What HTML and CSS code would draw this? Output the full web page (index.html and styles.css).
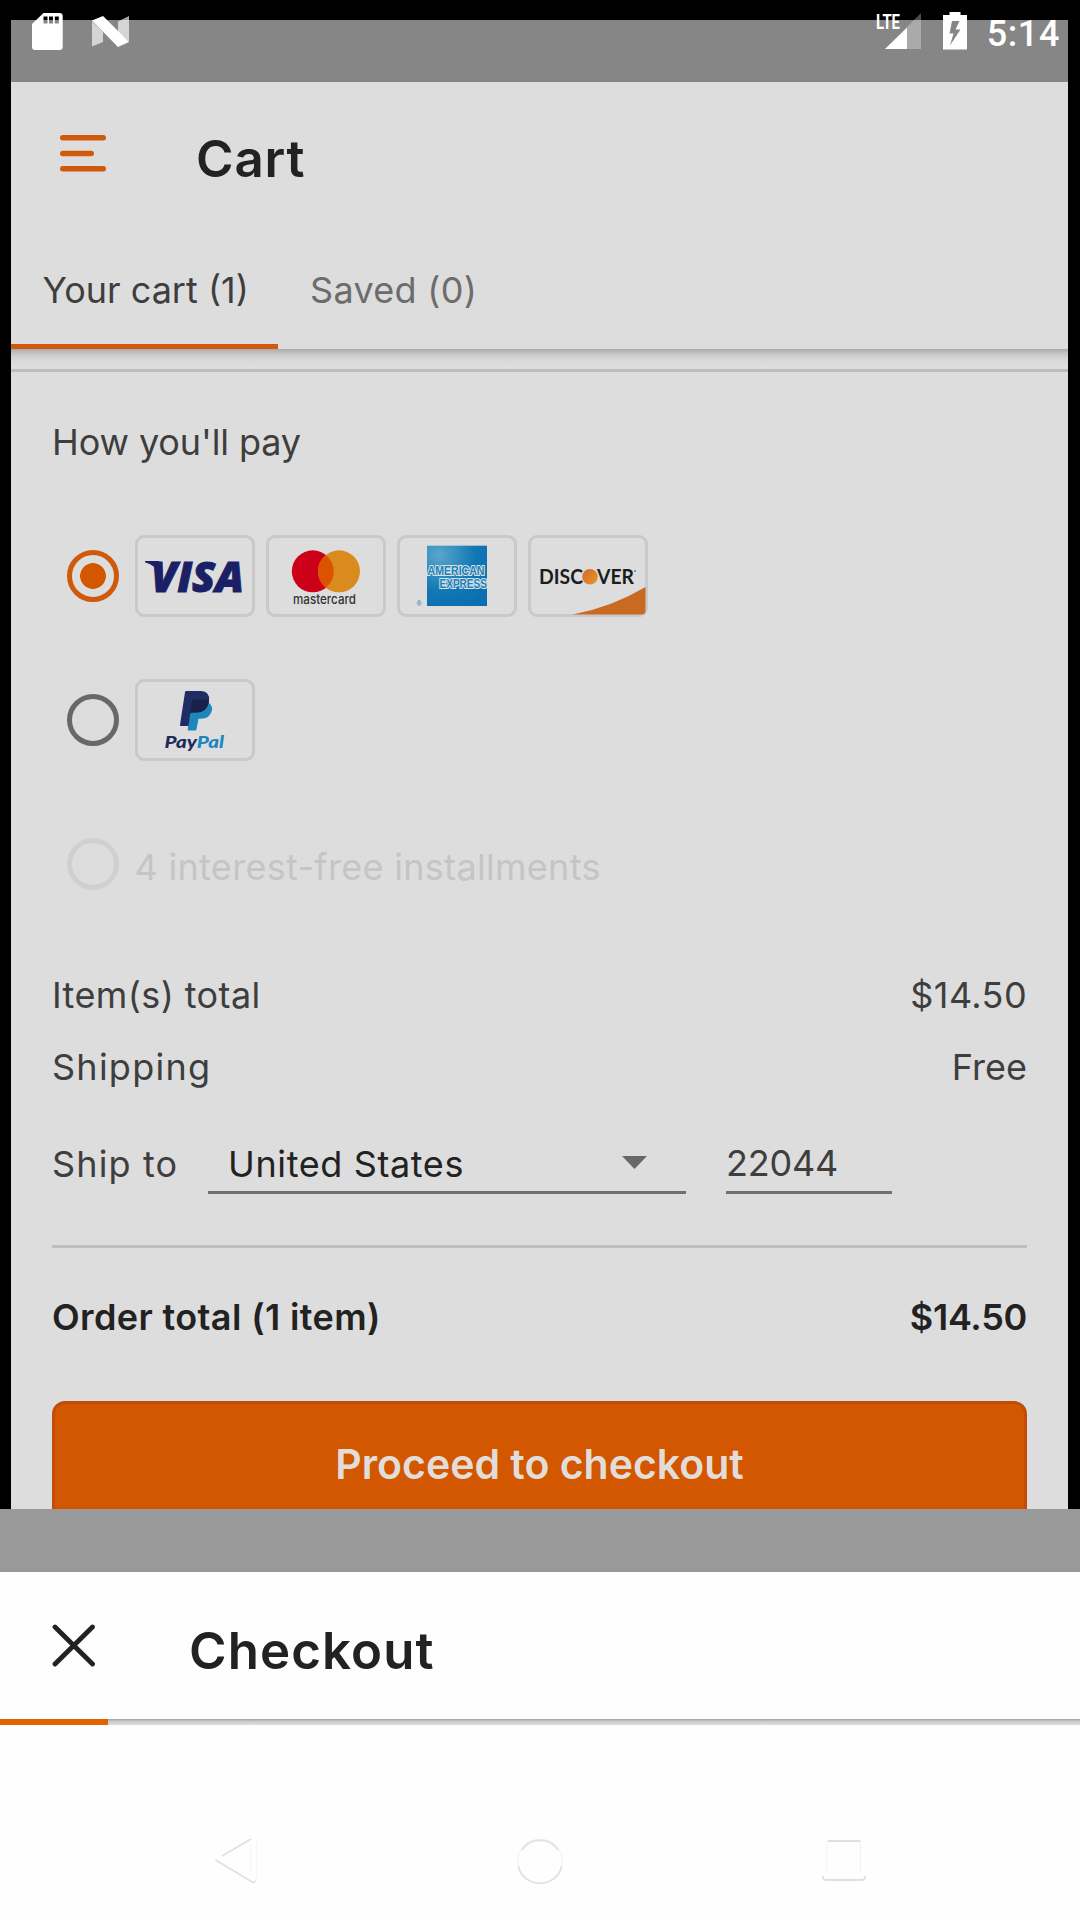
FILE: index.html
```html
<!DOCTYPE html>
<html lang="en">
<head>
<meta charset="utf-8">
<title>Cart</title>
<link rel="stylesheet" href="styles.css">
</head>
<body>
<div class="device">
  <div class="status-bar">
    <svg class="status-left" width="110" height="50" viewBox="0 0 110 50">
      <path fill="#fff" fill-rule="evenodd" d="M11.500 13H27.500Q30.700 13 30.700 16V47Q30.700 50 27.500 50H3Q0 50 0 47V24ZM11.500 16.500V23.500H15.500V16.500ZM17 16.500V23.500H21V16.500ZM22.800 16.500V23.500H26.800V16.500Z"/>
      <path fill="#fff" fill-opacity=".65" d="M60 21L71 32V42L60 46.500ZM86 21.500L97 16V42L86 32Z"/>
      <path fill="#fff" d="M60 20.500L71 16L97 42L86 47Z"/>
    </svg>
    <div class="status-right">
      <svg width="92" height="50" viewBox="0 0 92 50">
        <path fill="#fff" fill-opacity=".3" d="M45 13V49H31V27Z"/>
        <path fill="#fff" d="M9 49L31 27.500V49Z"/>
        <text class="lte" x="0" y="29" textLength="24" lengthAdjust="spacingAndGlyphs">LTE</text>
        <path fill="#fff" fill-rule="evenodd" d="M67 15H73.500V12H84.500V15H91V49.500H67ZM76 21L73.500 33.500H77.500L74 45.500L84.500 29.500H79.500L83.500 21Z"/>
      </svg>
      <span class="clock">5:14</span>
    </div>
  </div>

  <main class="cart">
    <header class="app-bar">
      <svg class="menu-icon" width="46" height="37" viewBox="0 0 46 37">
        <path d="M2.750 2.750H43.250M2.750 18.400H31.250M2.750 33.800H43.250" stroke="#d05a0c" stroke-width="5.500" stroke-linecap="round"/>
      </svg>
      <h1 class="title cart-title">Cart</h1>
    </header>
    <nav class="tabs">
      <a class="tab tab-active">Your cart (1)</a>
      <a class="tab tab-saved">Saved (0)</a>
    </nav>

    <section class="content">
      <div class="body">
        <h2 class="pay-title">How you'll pay</h2>
        <div class="option option-cards">
          <span class="radio radio-on"></span>
          <span class="card"><svg width="120" height="82" viewBox="0 0 120 82">
            <path fill="#1a1f66" d="M10 26H24L27 42Q21 30 10 27.200Z"/>
            <text class="visa" x="16" y="56.700" textLength="93" lengthAdjust="spacingAndGlyphs">VISA</text>
          </svg></span>
          <span class="card"><svg width="120" height="82" viewBox="0 0 120 82">
            <circle cx="46.800" cy="36.300" r="21" fill="#cd0019"/>
            <circle cx="73" cy="36.300" r="21" fill="#d98b1d"/>
            <path fill="#dc5200" d="M59.900 19.900A21 21 0 0 1 59.900 52.700A21 21 0 0 1 59.900 19.900Z"/>
            <text class="mc" x="27" y="68.800" textLength="63" lengthAdjust="spacingAndGlyphs">mastercard</text>
          </svg></span>
          <span class="card"><svg width="120" height="82" viewBox="0 0 120 82">
            <defs><radialGradient id="ax" cx=".2" cy=".15" r="1"><stop offset="0" stop-color="#5aa6cb"/><stop offset=".6" stop-color="#1278b4"/><stop offset="1" stop-color="#0a6fae"/></radialGradient></defs>
            <rect x="30" y="10.700" width="60" height="60.300" fill="url(#ax)"/>
            <text class="amex" x="30.500" y="40" textLength="57" lengthAdjust="spacingAndGlyphs">AMERICAN</text>
            <text class="amex" x="42.500" y="53" textLength="47.500" lengthAdjust="spacingAndGlyphs">EXPRESS</text>
            <text class="reg" x="19.500" y="71">®</text>
          </svg></span>
          <span class="card"><svg width="120" height="82" viewBox="0 0 120 82">
            <defs><linearGradient id="ball" x1="0" y1="0" x2="1" y2="1"><stop offset="0" stop-color="#d9652a"/><stop offset="1" stop-color="#e39a2c"/></linearGradient></defs>
            <path fill="#c96a22" d="M44.500 79.500Q84 72 117.500 52V76Q117.500 79.500 113 79.500Z"/>
            <text class="disc" x="11" y="49.300" textLength="44" lengthAdjust="spacingAndGlyphs">DISC</text>
            <circle cx="62" cy="41.800" r="7.800" fill="url(#ball)"/>
            <text class="disc" x="69" y="49.300" textLength="37" lengthAdjust="spacingAndGlyphs">VER</text>
            <circle cx="107" cy="36" r=".8" fill="#333"/>
          </svg></span>
        </div>
        <div class="option option-paypal">
          <span class="radio"></span>
          <span class="card"><svg width="120" height="82" viewBox="0 0 120 82">
            <path fill="#1c86bd" d="M56 24H74Q78 27 76.800 32Q74.500 39.800 66 39.800H63.500L61.500 50Q61.300 51.500 60 51.500H53.800Q52.500 51.500 52.800 50Z"/>
            <path fill="#1f2d63" d="M51.500 12H66Q75 12.500 74 21.500Q72.500 33.500 61 33.500H57Q55.500 33.500 55.200 35L53.500 47H46Q44.700 47 45 45.700L50 13.300Q50.200 12 51.500 12Z"/>
            <path fill="#1a2148" d="M58 20.500H70.500Q73 21 74 22.500Q72.200 33.500 61 33.500H57Q55.800 33.500 55.400 34.500L57 21.500Z"/>
            <text class="paypal" x="29.500" y="68.500" textLength="59.500" lengthAdjust="spacingAndGlyphs">Pay<tspan fill="#1c86bd">Pal</tspan></text>
          </svg></span>
        </div>
        <div class="option option-off">
          <span class="radio radio-off"></span>
          <span class="off-label">4 interest-free installments</span>
        </div>

        <div class="row row-items"><span class="items">Item(s) total</span><span class="price">$14.50</span></div>
        <div class="row"><span class="shipping">Shipping</span><span>Free</span></div>
        <div class="ship">
          <span class="ship-label">Ship to</span>
          <span class="select">United States
            <svg width="26" height="13" viewBox="0 0 26 13"><path fill="#686868" d="M0 0H25L12.500 13Z"/></svg>
          </span>
          <span class="zip">22044</span>
        </div>
        <div class="total"><span class="total-label">Order total (1 item)</span><span class="total-price">$14.50</span></div>
        <div class="button">Proceed to checkout</div>
      </div>
    </section>
  </main>

  <section class="sheet">
    <div class="sheet-status"></div>
    <header class="sheet-bar">
      <svg class="close-icon" width="44" height="44" viewBox="0 0 44 44">
        <path d="M3 3L40.500 40M40.500 3L3 40" stroke="#222" stroke-width="4.800" stroke-linecap="round"/>
      </svg>
      <h1 class="title sheet-title">Checkout</h1>
    </header>
    <div class="progress"><div class="progress-value"></div></div>
    <footer class="nav-bar">
      <svg width="42" height="46" viewBox="0 0 42 46" fill="none">
        <path d="M36 1L7 18M0.500 22L38 44.500L41 43" stroke="#e0e0e0" stroke-width="1.800"/>
        <path d="M35.500 2V34M41.500 2V42" stroke="#f6f6f6"/>
      </svg>
      <svg width="50" height="46" viewBox="0 0 50 46" fill="none">
        <circle cx="25" cy="23" r="22" stroke="#f3f3f3" stroke-width="1.200"/>
        <path d="M7 12A21.500 21.500 0 0 1 43 12M3 28A22.500 22 0 0 0 47 28" stroke="#e2e2e2" stroke-width="1.800"/>
      </svg>
      <svg width="44" height="46" viewBox="0 0 44 46" fill="none">
        <path d="M5.500 3H38.500M1 38Q1 42 4 42H40Q43 42 43 38" stroke="#e0e0e0" stroke-width="1.800"/>
        <path d="M5 4V34M38.500 4V34" stroke="#f4f4f4"/>
      </svg>
    </footer>
  </section>
</div>
</body>
</html>
```
FILE: styles.css
```css
* { box-sizing: border-box; }

body {
  margin: 0;
  background: #000;
  font-family: Inter, "Liberation Sans", sans-serif;
  font-size: 36px;
  line-height: 44px;
  color: #3e3e3e;
}

svg { display: block; flex: none; }

.device {
  position: relative;
  display: flex;
  flex-direction: column;
  width: 1080px;
  height: 1920px;
  overflow: hidden;
  background: #000;
}

/* System icons float over the app */
.status-bar {
  position: absolute;
  top: 0;
  left: 0;
  z-index: 2;
  display: flex;
  justify-content: space-between;
  width: 100%;
  height: 60px;
  padding: 0 20px 0 32px;
}
.status-right { display: flex; gap: 19px; }
.clock {
  padding-top: 12px;
  color: #fff;
  font: 500 36px/44px Roboto, sans-serif;
  letter-spacing: .6px;
}
.lte { font: 700 21px Roboto, sans-serif; fill: #fff; }

/* Cart screen */
.cart {
  flex: none;
  height: 1489px;
  margin: 20px 12px 0 11px;
  border-top: 62px solid #868686;
  background: #ddd;
  overflow: hidden;
}
.app-bar {
  display: flex;
  height: 138px;
  padding: 53px 0 0 49px;
}
.menu-icon { margin-right: 90px; }
.title {
  margin: 0;
  color: #222;
  font-size: 51px;
  font-weight: 600;
  line-height: 46px;
}
.cart-title { padding-top: 1px; letter-spacing: .8px; }
.tabs {
  display: flex;
  height: 129px;
}
.tab { padding-top: 48px; }
.tab-active {
  width: 267px;
  padding-left: 31.500px;
  border-bottom: 5px solid #d05a0c;
}
.tab-saved {
  padding-left: 32px;
  color: #6c6c6c;
  letter-spacing: .3px;
}

/* The gradient is the tab bar's drop shadow */
.content {
  padding-top: 20px;
  background: linear-gradient(#a9a9a9, #bcbcbc 3px, #cecece 7px, #d9d9d9 12px, #ddd 17px);
}
.body {
  border-top: 3px solid #bdbdbd;
  padding: 0 41px;
}
.pay-title {
  height: 138px;
  margin: 0;
  font-size: 36px;
  font-weight: 400;
  line-height: 140px;
  letter-spacing: -.1px;
}
.option {
  display: flex;
  align-items: center;
  gap: 11px;
  height: 132px;
  padding-left: 15px;
}
.option-paypal { height: 156px; }
.radio {
  width: 52px;
  height: 52px;
  margin: 0 4.500px 1px 0;
  border: 5.500px solid #686868;
  border-radius: 50%;
}
.radio-on {
  border-color: #d05a0c;
  background: radial-gradient(circle, #d45700 12.500px, transparent 13.200px);
}
.radio-off { border-color: #d0d0d0; }
.off-label {
  padding-top: 5px;
  color: #c5c5c5;
  letter-spacing: .31px;
}
.card {
  width: 120px;
  height: 82px;
  border-radius: 9px;
  box-shadow: inset 0 0 0 3px #c9c9c9;
}

.visa {
  font: italic 800 42px "Open Sans", sans-serif;
  fill: #1a1f66;
  stroke: #1a1f66;
  stroke-width: 1px;
}
.mc { font: 500 13.500px Inter, sans-serif; fill: #333; }
.amex {
  font: 700 12px "Liberation Sans", sans-serif;
  fill: #1f7fb6;
  stroke: #d3e1e9;
  stroke-width: 2.200px;
  paint-order: stroke;
}
.reg { font: 7px "Liberation Sans", sans-serif; fill: #2a7fae; }
.disc { font: 700 21px Lato, sans-serif; fill: #1c1c1c; }
.paypal { font: italic 900 17px Lato, sans-serif; fill: #1f2a5a; }

.row {
  display: flex;
  justify-content: space-between;
  height: 71px;
  line-height: 73px;
}
.row-items {
  height: 72px;
  margin-top: 29px;
}
.items { letter-spacing: .4px; }
.price { letter-spacing: .4px; }
.shipping { letter-spacing: 1.250px; }

.ship {
  display: flex;
  align-items: center;
  height: 143px;
  padding-bottom: 19px;
}
.ship-label {
  width: 156px;
  letter-spacing: 1.150px;
}
.select {
  display: flex;
  justify-content: space-between;
  align-items: center;
  width: 478px;
  height: 60px;
  margin-right: 40px;
  padding: 2px 38px 0 20px;
  border-bottom: 3px solid #707070;
  color: #222;
  letter-spacing: .62px;
}
.select svg { margin-top: -2px; }
.zip {
  width: 166px;
  height: 60px;
  border-bottom: 3px solid #707070;
  line-height: 59px;
  letter-spacing: -.2px;
}
.total {
  display: flex;
  justify-content: space-between;
  height: 141px;
  border-top: 3px solid #bfbfbf;
  color: #222;
  font-weight: 600;
  line-height: 138px;
}
.total-label { letter-spacing: .380px; }
.total-price { letter-spacing: -.3px; }
.button {
  height: 126px;
  margin-top: 15px;
  border: 3px solid #c24c08;
  border-radius: 13px;
  background: #d25700;
  color: #e2ddd8;
  font-size: 41px;
  font-weight: 600;
  line-height: 120px;
  text-align: center;
}

/* Checkout sheet sliding up */
.sheet {
  display: flex;
  flex: 1;
  flex-direction: column;
  background: #fefefe;
}
.sheet-status { height: 63px; background: #999; }
.sheet-bar {
  display: flex;
  height: 147px;
  padding: 52px 0 0 52px;
}
.close-icon { margin-right: 93px; }
.sheet-title { padding-top: 4px; letter-spacing: 1.100px; }
.progress {
  height: 6px;
  background: linear-gradient(#a4a4a4, #d0d0d0 50%, #dcdcdc);
}
.progress-value { width: 108px; height: 6px; background: #e06400; }
.nav-bar {
  display: flex;
  justify-content: space-between;
  padding: 113px 214px 0 215px;
}
```
